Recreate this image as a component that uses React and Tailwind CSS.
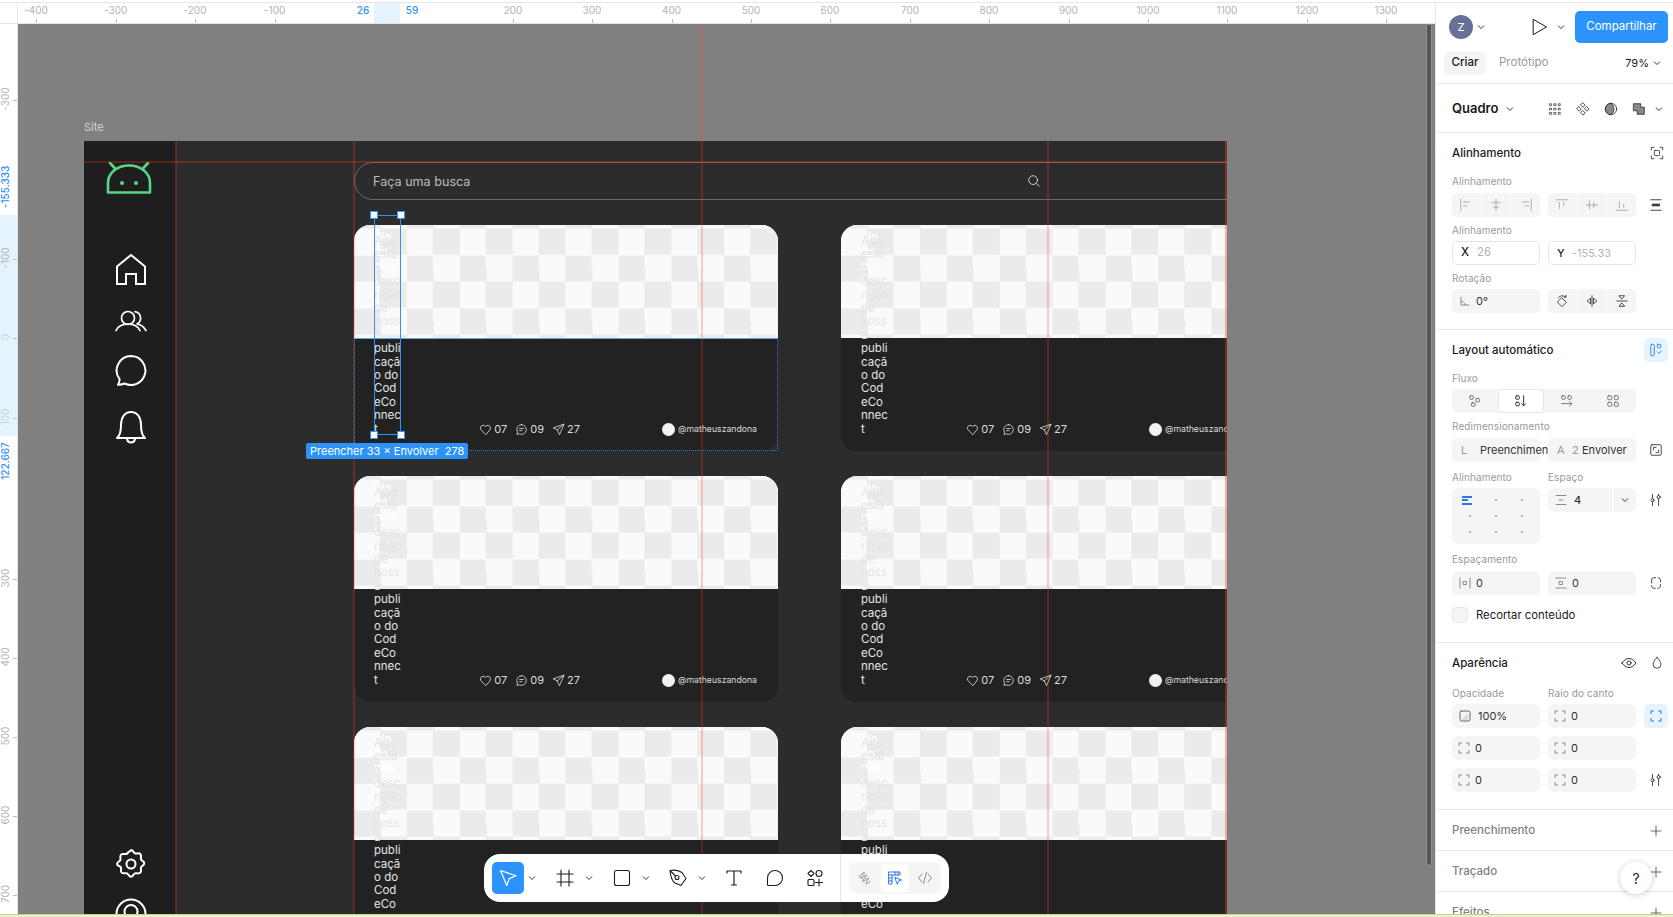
import React from "react";

const Svg = ({ s = 16, w, h, vb = "0 0 16 16", c = "currentColor", sw = 1, className = "", children }) => (
  <svg width={w || s} height={h || s} viewBox={vb} fill="none" stroke={c} strokeWidth={sw} strokeLinecap="round" strokeLinejoin="round" className={"shrink-0 " + className}>
    {children}
  </svg>
);

const Chev = ({ className = "" }) => (
  <svg width="8" height="6" viewBox="0 0 8 6" fill="none" stroke="#333" strokeWidth="1" className={"shrink-0 " + className}><path d="M1 1.5 4 4.5 7 1.5" /></svg>
);

/* ---------- rulers ---------- */
const topMarks = [[-400, 36], [-300, 115.7], [-200, 195], [-100, 274.7], [200, 513], [300, 592], [400, 671.5], [500, 751], [600, 830], [700, 910], [800, 989], [900, 1068.5], [1000, 1148], [1100, 1227], [1200, 1307], [1300, 1386]];
const leftMarks = [[-300, 100, "-300"], [-100, 259, "-100"], [0, 338, "0"], [100, 418, "100"], [300, 579, "300"], [400, 658, "400"], [500, 737, "500"], [600, 816, "600"], [700, 895, "700"]];

function TopRuler() {
  return (
    <div className="h-[21px] flex bg-white border-b border-[#e6e6e6] shrink-0 relative">
      <div className="w-[18px] shrink-0 border-r border-[#e6e6e6]" />
      <div className="flex-1 relative overflow-hidden text-[10px] leading-[12px] text-[#b3b3b3]">
        <div className="absolute left-[356px] top-0 w-[26px] h-[20px] bg-[#e5f3ff]" />
        {topMarks.map(([v, x]) => (
          <React.Fragment key={v}>
            <span className="absolute top-[1px] -translate-x-1/2" style={{ left: x - 18 }}>{v}</span>
            <span className="absolute top-[16px] w-px h-[4px] bg-[#bbb]" style={{ left: x - 18 }} />
          </React.Fragment>
        ))}
        <span className="absolute top-[1px] left-[345px] -translate-x-1/2 text-[#2b93fb] font-medium">26</span>
        <span className="absolute top-[1px] left-[394px] -translate-x-1/2 text-[#2b93fb] font-medium">59</span>
      </div>
    </div>
  );
}

function LeftRuler() {
  return (
    <div className="w-[18px] shrink-0 bg-white border-r border-[#e6e6e6] relative overflow-hidden text-[10px] leading-[12px] text-[#b3b3b3]">
      <div className="absolute left-0 top-[191px] w-[17px] h-[221px] bg-[#e5f3ff]" />
      {leftMarks.map(([v, y, t]) => (
        <React.Fragment key={v}>
          <span className={"absolute left-[5px] -translate-x-1/2 -translate-y-1/2 -rotate-90 " + (v === 0 || v === 100 ? "text-[#c9d3dc]" : "")} style={{ top: y - 24 - 1 }}>{t}</span>
          <span className="absolute left-[13px] h-px w-[4px] bg-[#bbb]" style={{ top: y - 24 }} />
        </React.Fragment>
      ))}
      <span className="absolute left-[5px] top-[163px] -translate-x-1/2 -translate-y-1/2 -rotate-90 text-[#2b93fb] font-medium whitespace-nowrap">-155.333</span>
      <span className="absolute left-[5px] top-[437px] -translate-x-1/2 -translate-y-1/2 -rotate-90 text-[#2b93fb] font-medium whitespace-nowrap">122.667</span>
    </div>
  );
}

/* ---------- card ---------- */
function Card() {
  const lines = ["Aqui", "está", "a", "desc", "rição", "de", "noss", "a", "publi", "caçã", "o do", "Cod", "eCo", "nnec", "t"];
  return (
    <div className="w-[424px] h-[226px] rounded-[16px] overflow-hidden relative">
      <div className="h-[113px] bg-[#fafafa] bg-[conic-gradient(#ebebeb_25%,#fafafa_0_50%,#ebebeb_0_75%,#fafafa_0)] bg-[length:52.9px_53px] bg-[position:0px_3.6px]" />
      <div className="h-[113px] bg-[#222222] flex items-end justify-end pb-[15px] pr-[21px] text-[#dcdcdc]">
        <div className="flex items-center text-[11px] leading-[14px] gap-[8px] mr-[82px]">
          <span className="flex items-center gap-[2px]">
            <Svg s={13} c="#e0e0e0"><path d="M8 14 2.400 8.200A3.400 3.400 0 0 1 7.200 3.500L8 4.300l.8-.8a3.400 3.400 0 0 1 4.800 4.700z" /></Svg>07
          </span>
          <span className="flex items-center gap-[2px]">
            <Svg s={13} c="#e0e0e0"><path d="M8 2a6 6 0 1 1-2.700 11.400L2.400 14l.7-2.800A6 6 0 0 1 8 2zM5.600 6.800h4.800M5.600 9.400h3" /></Svg>09
          </span>
          <span className="flex items-center gap-[2px]">
            <Svg s={13} c="#e0e0e0"><path d="M14.500 1.500 1.500 6l5 2.500 2.500 5.500zM6.500 8.500l8-7" /></Svg>27
          </span>
        </div>
        <div className="flex items-center gap-[3px] w-[95px] shrink-0">
          <span className="w-[13px] h-[13px] rounded-full bg-[#f2f2f2] shrink-0" />
          <span className="text-[8.700px] leading-[14px] whitespace-nowrap">@matheuszandona</span>
        </div>
      </div>
      <div className="absolute left-[20px] -top-[10px] w-[27px] text-[11.500px] leading-[14.800px] font-semibold text-white">
        Tít<br />ulo<br />do<br />pos<br />t
      </div>
      <div className="absolute left-[20px] top-[10px] w-[27px] text-[11.500px] leading-[13.400px] text-[#e4e4e4]">
        {lines.map((l, i) => <div key={i} className="whitespace-nowrap">{l}</div>)}
      </div>
    </div>
  );
}

/* ---------- sidebar ---------- */
function Sidebar() {
  return (
    <div className="w-[92px] shrink-0 bg-[#1e1e1e] flex flex-col items-center text-white pl-[2px]">
      <svg width="46" height="32" viewBox="0 0 46 32" fill="none" stroke="#57d684" strokeWidth="2.600" strokeLinecap="round" strokeLinejoin="round" className="mt-[21px] shrink-0 -ml-[4px]">
        <path d="M2 30.500V21C2 11 11 3.500 23 3.500S44 11 44 21v9.500zM4 1l5.500 6M42 1l-5.500 6" />
        <circle cx="16" cy="21" r="2" fill="#57d684" stroke="none" />
        <circle cx="30" cy="21" r="2" fill="#57d684" stroke="none" />
      </svg>
      <Svg w={32} h={34} vb="0 0 32 34" sw={2} c="#fff" className="mt-[59px]"><path d="M2 31V13.500L16 2l14 11.500V31H21V21h-10v10z" strokeLinecap="square" strokeLinejoin="miter" /></Svg>
      <Svg w={32} h={22} vb="0 0 32 22" sw={1.700} c="#fff" className="mt-[23px]">
        <circle cx="13" cy="8" r="6.500" />
        <path d="M1 20.500c2-4.300 6-6.300 12-6.300s10 2 12 6.300" />
        <path d="M20 1.700a6.500 6.500 0 0 1 2 12.200c4 .8 7 3 9 6.600" />
      </Svg>
      <Svg w={32} h={32} vb="0 0 32 32" sw={2} c="#fff" className="mt-[22px]">
        <path d="M16 2a14.500 14.500 0 1 1-6.500 27.500c-2 .9-4.500 1.300-6.500 1.200 1-1.500 1.600-3.500 1.600-5.500A14.500 14.500 0 0 1 16 2z" />
      </Svg>
      <Svg w={32} h={34} vb="0 0 32 34" sw={2} c="#fff" className="mt-[24px]">
        <path d="M2 28c3-2.500 4-6 4-13C6 7 10 2 16 2s10 5 10 13c0 7 1 10.500 4 13z" />
        <path d="M12 29c.5 2.500 2 3.500 4 3.500s3.500-1 4-3.500" />
      </Svg>
      <Svg w={32} h={32} vb="0 0 24 24" sw={1.500} c="#fff" className="mt-[404px]">
        <circle cx="12" cy="12" r="3.400" />
        <path d="M12 1.500c1.600 0 1.900 2 3 2.500s2.800-.700 4 .5.100 2.800.500 4 2.500 1.400 2.500 3-2 1.900-2.500 3 .7 2.800-.5 4-2.800.100-4 .500-1.400 2.500-3 2.500-1.900-2-3-2.500-2.800.700-4-.5-.100-2.800-.500-4S1.500 13.600 1.500 12s2-1.900 2.500-3-.700-2.800.500-4 2.800-.100 4-.500 1.900-2.500 3.500-2.500z" />
      </Svg>
      <Svg w={32} h={32} vb="0 0 32 32" sw={2} c="#fff" className="mt-[18px]">
        <circle cx="16" cy="16" r="14.500" />
        <circle cx="16" cy="13.500" r="6.500" />
      </Svg>
    </div>
  );
}

/* ---------- toolbar ---------- */
function Toolbar() {
  return (
    <div className="absolute left-[466px] top-[830px] w-[465px] h-[48px] bg-white rounded-[16px] flex items-center pl-[8px] text-[#1e1e1e]">
      <div className="w-[32px] h-[32px] rounded-[5px] bg-[#2b93fb] flex items-center justify-center">
        <Svg s={20} vb="0 0 20 20" c="#fff" sw={1.200}><path d="M2.500 2.500 18 7.800 11.200 10.600 8.800 17.500z" /></Svg>
      </div>
      <Chev className="ml-[4px]" />
      <Svg s={18} vb="0 0 18 18" className="ml-[20px]" sw={1.100}><path d="M5 1v16M13 1v16M1 5h16M1 13h16" /></Svg>
      <Chev className="ml-[11px]" />
      <Svg s={18} vb="0 0 18 18" className="ml-[20px]" sw={1.100}><rect x="1.500" y="1.500" width="15" height="15" rx="2" /></Svg>
      <Chev className="ml-[11px]" />
      <Svg s={20} vb="0 0 20 20" className="ml-[18px]" sw={1.100}><path d="M2 2.500c4-.8 8-.3 12 2l4 6-5 7-6-2.500C4 13 2.500 8 2 2.500zM2 2.500l5.500 5.500" /><circle cx="9" cy="9.500" r="2" /></Svg>
      <Chev className="ml-[10px]" />
      <Svg s={18} vb="0 0 18 18" className="ml-[19px]" sw={1.200}><path d="M2 4V2h14v2M9 2v14M6.500 16h5" /></Svg>
      <Svg s={18} vb="0 0 18 18" className="ml-[23px]" sw={1.100}><path d="M9 1.500a7.500 7.500 0 0 1 0 15H2.500a1 1 0 0 1-1-1V9A7.500 7.500 0 0 1 9 1.500z" /></Svg>
      <Svg s={18} vb="0 0 18 18" className="ml-[22px]" sw={1.100}><path d="M5 1.500 8 4.500 5 7.500 2 4.500z" /><circle cx="13" cy="4.500" r="3" /><rect x="2" y="10.500" width="6" height="6" rx="1" /><path d="M13 10v7M9.500 13.500h7" /></Svg>
      <div className="ml-[16px] w-px h-[48px] bg-[#e6e6e6]" />
      <div className="ml-[8px] w-[92px] h-[32px] bg-[#f5f5f5] rounded-[8px] flex items-center pl-[2px]">
        <div className="w-[28px] h-[28px] flex items-center justify-center">
          <Svg s={16} c="#8c8c8c"><path d="M2 7c3-4 5-5 5.500-4.500S3 8 3.500 8.500 9 4.500 9.500 5 5 11 5.500 11.500 11 7.500 11.500 8 8 13 9 13.500s2.500-.5 4-2" /></Svg>
        </div>
        <div className="ml-[2px] w-[28px] h-[28px] rounded-[5px] bg-white flex items-center justify-center">
          <Svg s={16} c="#2b78e4"><path d="M2 2h11v3H5v9H2zM2 5h3M2 8h3M2 11h3M8 2v3M11 2v3" /><path d="M8 7.500 14.500 10l-3 1-1 3z" /></Svg>
        </div>
        <div className="ml-[2px] w-[28px] h-[28px] flex items-center justify-center">
          <Svg s={16} c="#8c8c8c"><path d="M5 4 1.500 8 5 12M11 4l3.500 4L11 12M9.500 2.500l-3 11" /></Svg>
        </div>
      </div>
    </div>
  );
}

/* ---------- canvas ---------- */
function Canvas() {
  return (
    <div className="flex-1 relative overflow-hidden bg-[#808080] pl-[66px] pt-[95px] flex flex-col">
      <div className="h-[22px] shrink-0 text-[11px] leading-[16px] text-[#d4d4d4]">Site</div>
      <div className="w-[1143px] flex-1 min-h-0 flex overflow-hidden bg-[#2c2c2c]">
        <Sidebar />
        <div className="flex-1 min-w-0 overflow-hidden pl-[178px] pt-[21px]">
          <div className="w-[1000px] h-[38px] rounded-full border border-[#6a6a6a] flex items-center pl-[18px] pt-[2px] text-[12.600px] text-[#bdbdbd] relative">
            Faça uma busca
            <Svg s={14} c="#e0e0e0" className="absolute left-[672px] top-[11px]"><circle cx="7" cy="7" r="5" /><path d="m11 11 3 3" /></Svg>
          </div>
          <div className="grid grid-cols-[424px_424px] gap-x-[63px] gap-y-[25px] mt-[25px]">
            {[0, 1, 2, 3, 4, 5].map((i) => <Card key={i} />)}
          </div>
        </div>
      </div>

      {/* guides */}
      <div className="absolute left-[683px] top-0 bottom-0 w-[2px] bg-[#ff3b20]/25" />
      <div className="absolute left-[157px] top-[117px] bottom-0 w-[2px] bg-[#ff3b20]/25" />
      <div className="absolute left-[335px] top-[117px] bottom-0 w-[2px] bg-[#ff3b20]/25" />
      <div className="absolute left-[1029px] top-[117px] bottom-0 w-[2px] bg-[#ff3b20]/25" />
      <div className="absolute left-[1207px] top-[117px] bottom-0 w-[2px] bg-[#ff3b20]/40" />
      <div className="absolute left-[66px] top-[137px] w-[1143px] h-[2px] bg-[#ff3b20]/25" />

      {/* selection */}
      <div className="absolute left-[336px] top-[314px] w-[424px] h-[113px] border-x border-b border-dotted border-[#2b7fd6]" />
      <div className="absolute left-[336px] top-[314px] w-[424px] h-px bg-[#5aa8f0]" />
      <div className="absolute left-[356px] top-[191px] w-[27px] h-[220px] border border-[#2b93fb]" />
      {["left-[352px] top-[187px]", "left-[379px] top-[187px]", "left-[352px] top-[407px]", "left-[379px] top-[407px]"].map((p) => (
        <div key={p} className={"absolute w-[8px] h-[8px] bg-white border border-[#2b93fb] " + p} />
      ))}
      <div className="absolute left-[288px] top-[419px] h-[16px] w-[162px] rounded-[2px] bg-[#2b93fb] text-white text-[11px] leading-[16px] px-[4px] whitespace-pre">Preencher 33 × Envolver  278</div>

      <Toolbar />
      <div className="absolute left-[1408px] top-0 h-[842px] w-[6px] rounded-b-full bg-[#555] border border-[#909090]" />
    </div>
  );
}

/* ---------- right panel ---------- */
const Label = ({ children, className = "" }) => <div className={"text-[10px] leading-[12px] tracking-[0.1px] text-[#999] " + className}>{children}</div>;
const Title = ({ children, className = "" }) => <div className={"text-[11.500px] leading-[16px] font-medium text-[#1a1a1a] " + className}>{children}</div>;
const Field = ({ children, className = "" }) => <div className={"h-[24px] rounded-[5px] bg-[#f5f5f5] flex items-center text-[11px] text-[#333] " + className}>{children}</div>;
const Corner = ({ c = "#8c8c8c" }) => <Svg s={12} vb="0 0 12 12" c={c} sw={1}><path d="M1 4V1h3M8 1h3v3M11 8v3H8M4 11H1V8" strokeLinecap="butt" /></Svg>;
const Tune = () => <Svg s={14} c="#333"><path d="M4 1.500v5M4 10v4.500M11 1.500V3M11 6.500v8" /><circle cx="4" cy="8.300" r="1.800" /><circle cx="11" cy="4.700" r="1.800" /></Svg>;
const G3 = ({ children, className = "" }) => <div className={"grid grid-cols-[88px_88px_24px] gap-x-[8px] " + className}>{children}</div>;
const Cell = ({ children }) => <div className="flex-1 h-full flex items-center justify-center">{children}</div>;
const D = "#a6a6a6";

function Panel() {
  return (
    <div className="w-[238px] shrink-0 bg-white border-l border-[#e6e6e6] flex flex-col overflow-hidden text-[#1a1a1a]">
      <div className="h-[81px] shrink-0 border-b border-[#e6e6e6] pt-[8px]">
        <div className="h-[32px] flex items-center pl-[13px]">
          <div className="w-[24px] h-[24px] rounded-full bg-[#667099] text-white text-[11px] font-medium flex items-center justify-center">Z</div>
          <Chev className="ml-[4px]" />
          <Svg w={16} h={18} vb="0 0 16 18" c="#1a1a1a" className="ml-[47px]"><path d="M1.500 1.500 14.500 9 1.500 16.500z" /></Svg>
          <Chev className="ml-[9px]" />
          <div className="ml-[10px] w-[93px] h-[32px] rounded-[5px] bg-[#2b93fb] text-white text-[11.500px] flex items-center justify-center">Compartilhar</div>
        </div>
        <div className="h-[24px] mt-[8px] flex items-center pl-[8px] text-[11.500px]">
          <div className="w-[42px] h-[24px] rounded-[5px] bg-[#f5f5f5] font-medium flex items-center justify-center">Criar</div>
          <div className="ml-[13px] text-[#999]">Protótipo</div>
          <div className="ml-auto mr-[12px] flex items-center gap-[4px] text-[11px]">79%<Chev /></div>
        </div>
      </div>

      <div className="h-[49px] shrink-0 border-b border-[#e6e6e6] flex items-center pl-[16px] pr-[10px] pt-[2px]">
        <div className="text-[13px] font-semibold">Quadro</div>
        <Chev className="ml-[8px]" />
        <Svg s={14} c="#333" sw={0.800} className="ml-[34px]"><path d="M2 2h2v2H2zM7 2h2v2H7zM12 2h2v2h-2zM2 7h2v2H2zM7 7h2v2H7zM12 7h2v2h-2zM2 12h2v2H2zM7 12h2v2H7zM12 12h2v2h-2z" /></Svg>
        <Svg s={14} c="#333" className="ml-[14px]"><path d="M8 1 10.500 3.500 8 6 5.500 3.500zM3.500 5.500 6 8 3.500 10.500 1 8zM12.500 5.500 15 8l-2.500 2.500L10 8zM8 10l2.500 2.500L8 15l-2.500-2.500z" /></Svg>
        <Svg s={14} c="#333" className="ml-[14px]"><circle cx="8" cy="8" r="6.500" /><path d="M8 1.500a6.500 6.500 0 0 0 0 13 8 8 0 0 0 0-13z" fill="#888" /></Svg>
        <Svg s={14} c="#333" className="ml-[14px]"><path d="M2 2h8v4h4v8H6v-4H2z" fill="#888" /></Svg>
        <Chev className="ml-[9px]" />
      </div>

      <div className="h-[197px] shrink-0 border-b border-[#e6e6e6] pl-[16px] pt-[12px]">
        <div className="flex items-center justify-between w-[212px] h-[16px]">
          <Title>Alinhamento</Title>
          <Svg s={14} c="#333"><path d="M1.500 4.500v-3h3M11.500 1.500h3v3M14.500 11.500v3h-3M4.500 14.500h-3v-3" /><rect x="5" y="5" width="6" height="6" rx="1" /></Svg>
        </div>
        <Label className="mt-[14px]">Alinhamento</Label>
        <G3 className="mt-[6px]">
          <Field className="overflow-hidden">
            <Cell><Svg s={14} c={D}><path d="M2 1.500v13M5 4.500h7M5 9h4" /></Svg></Cell><div className="w-px h-full bg-white" />
            <Cell><Svg s={14} c={D}><path d="M8 1.500v13M3 5h10M5 10.500h6" /></Svg></Cell><div className="w-px h-full bg-white" />
            <Cell><Svg s={14} c={D}><path d="M14 1.500v13M4 4.500h7M7 9h4" /></Svg></Cell>
          </Field>
          <Field className="overflow-hidden">
            <Cell><Svg s={14} c={D}><path d="M1.500 2h13M5 5v7M10 5v4" /></Svg></Cell><div className="w-px h-full bg-white" />
            <Cell><Svg s={14} c={D}><path d="M1.500 8h13M5 3.500v9M10 5v6" /></Svg></Cell><div className="w-px h-full bg-white" />
            <Cell><Svg s={14} c={D}><path d="M1.500 14h13M5 4v7M10 7v4" /></Svg></Cell>
          </Field>
          <div className="flex items-center justify-center"><Svg s={14} c="#333"><path d="M2 2h12M2 14h12" /><rect x="4" y="7" width="8" height="2" fill="#333" /></Svg></div>
        </G3>
        <Label className="mt-[7px]">Alinhamento</Label>
        <G3 className="mt-[5px]">
          <div className="h-[24px] rounded-[5px] border border-[#e6e6e6] flex items-center text-[11.500px] pl-[8px]"><span className="font-medium w-[16px]">X</span><span className="text-[#b3b3b3]">26</span></div>
          <div className="h-[24px] rounded-[5px] border border-[#e6e6e6] flex items-center text-[11px] pl-[8px]"><span className="font-medium w-[15px]">Y</span><span className="text-[#b3b3b3]">-155.33</span></div>
        </G3>
        <Label className="mt-[7px]">Rotação</Label>
        <G3 className="mt-[5px]">
          <Field className="pl-[7px]"><Svg s={12} vb="0 0 12 12" c="#8c8c8c"><path d="M2 2v8h8M2 6c2 0 4 2 4 4" /></Svg><span className="ml-[5px]">0°</span></Field>
          <Field className="overflow-hidden">
            <Cell><Svg s={14} c="#333"><path d="M8 4.500 13 9.500 8 14.500 3 9.500zM3.500 4.500C5 2 10 1 12.500 3.500M12.500 1.500v2h-2" /></Svg></Cell><div className="w-px h-full bg-white" />
            <Cell><Svg s={14} c="#333"><path d="M8 2v12M6 5 2.500 8 6 11zM10 5l3.500 3L10 11z" /></Svg></Cell><div className="w-px h-full bg-white" />
            <Cell><Svg s={14} c="#333"><path d="M2 8h12M5 2h6L8 5.500zM5 14h6l-3-3.500z" /></Svg></Cell>
          </Field>
        </G3>
      </div>

      <div className="h-[313px] shrink-0 border-b border-[#e6e6e6] pl-[16px] pt-[8px]">
        <div className="flex items-center justify-between w-[216px] h-[24px]">
          <Title>Layout automático</Title>
          <div className="w-[24px] h-[24px] rounded-[5px] bg-[#e5f4ff] flex items-center justify-center"><Svg s={14} c="#2b78e4"><rect x="2" y="1.500" width="4" height="13" rx="1" /><rect x="9.500" y="1.500" width="4" height="4" rx="1" /><path d="m9.500 10 2 2 2.500-3" /></Svg></div>
        </div>
        <Label className="mt-[10px]">Fluxo</Label>
        <Field className="mt-[5px] w-[184px] overflow-hidden">
          <div className="w-[46px] h-full flex items-center justify-center"><Svg s={14} c="#666"><rect x="2" y="2" width="4" height="4" rx="1" /><rect x="9" y="5" width="4" height="4" rx="1" /><rect x="4" y="10" width="4" height="4" rx="1" /></Svg></div>
          <div className="w-[46px] h-[24px] rounded-[5px] bg-white border border-[#e6e6e6] flex items-center justify-center"><Svg s={14} c="#1a1a1a"><rect x="2" y="2" width="4" height="4" rx="1" /><rect x="2" y="9.500" width="4" height="4" rx="1" /><path d="M11 2v11M8.500 11 11 13.500 13.500 11" /></Svg></div>
          <div className="w-[46px] h-full flex items-center justify-center"><Svg s={14} c="#666"><rect x="2" y="2" width="4" height="4" rx="1" /><rect x="9" y="2" width="4" height="4" rx="1" /><path d="M2 11h11M11 8.500 13.500 11 11 13.500" /></Svg></div>
          <div className="w-[46px] h-full flex items-center justify-center"><Svg s={14} c="#666"><rect x="2" y="2" width="4.500" height="4.500" rx="1" /><rect x="9.500" y="2" width="4.500" height="4.500" rx="1" /><rect x="2" y="9.500" width="4.500" height="4.500" rx="1" /><rect x="9.500" y="9.500" width="4.500" height="4.500" rx="1" /></Svg></div>
        </Field>
        <Label className="mt-[7px]">Redimensionamento</Label>
        <G3 className="mt-[6px]">
          <Field className="pl-[9px] whitespace-nowrap"><span className="text-[#999] w-[18px] shrink-0">L</span><span className="ml-[1px] w-[69px] shrink-0 overflow-hidden">Preenchimento</span></Field>
          <Field className="pl-[9px] overflow-hidden whitespace-nowrap"><span className="text-[#999] w-[15px] shrink-0">A</span><span className="text-[#999] w-[10px] shrink-0">2</span><span>Envolver</span></Field>
          <div className="flex items-center justify-center"><Svg s={14} c="#333"><rect x="2" y="2" width="12" height="12" rx="1.500" /><path d="M5 8V5h3M11 8v3H8" /></Svg></div>
        </G3>
        <G3 className="mt-[9px]">
          <Label>Alinhamento</Label><Label>Espaço</Label>
        </G3>
        <G3 className="mt-[5px]">
          <div className="h-[56px] rounded-[5px] bg-[#f5f5f5] grid grid-cols-3 grid-rows-3 px-[5px] py-[4px]">
            <div className="flex flex-col justify-center items-center gap-[1.500px]"><span className="w-[10px] h-[2px] bg-[#2b78e4] self-start ml-[5px]" /><span className="w-[6px] h-[2px] bg-[#2b78e4] self-start ml-[5px]" /><span className="w-[10px] h-[2px] bg-[#2b78e4] self-start ml-[5px]" /></div>
            {[0, 1, 2, 3, 4, 5, 6, 7].map((i) => <div key={i} className="flex items-center justify-center"><span className="w-[1.500px] h-[1.500px] bg-[#b3b3b3]" /></div>)}
          </div>
          <Field className="pl-[7px]">
            <Svg s={12} vb="0 0 12 12" c="#8c8c8c"><path d="M1 1.500h10M1 10.500h10M4 6h4" /></Svg>
            <span className="ml-[7px] font-medium">4</span>
            <div className="ml-auto w-[24px] h-full border-l border-white flex items-center justify-center"><Chev /></div>
          </Field>
          <div className="flex items-start justify-center pt-[5px]"><Tune /></div>
        </G3>
        <Label className="mt-[9px]">Espaçamento</Label>
        <G3 className="mt-[6px]">
          <Field className="pl-[7px]"><Svg s={12} vb="0 0 12 12" c="#8c8c8c"><path d="M1 1v10M11 1v10" /><rect x="4.500" y="4.500" width="3" height="3" /></Svg><span className="ml-[5px]">0</span></Field>
          <Field className="pl-[7px]"><Svg s={12} vb="0 0 12 12" c="#8c8c8c"><path d="M1 1h10M1 11h10" /><rect x="4.500" y="4.500" width="3" height="3" /></Svg><span className="ml-[5px]">0</span></Field>
          <div className="flex items-center justify-center"><Svg s={14} c="#333"><path d="M3 4.500c0-1.500 1-2.500 2.500-2.500h5C12 2 13 3 13 4.500v7c0 1.500-1 2.500-2.500 2.500h-5C4 14 3 13 3 11.500z" strokeDasharray="6 3" /></Svg></div>
        </G3>
        <div className="flex items-center mt-[12px]">
          <div className="w-[16px] h-[16px] rounded-[4px] bg-[#f5f5f5] border border-[#e6e6e6]" />
          <span className="ml-[8px] text-[11.300px]">Recortar conteúdo</span>
        </div>
      </div>

      <div className="h-[167px] shrink-0 border-b border-[#e6e6e6] pl-[16px] pt-[12px]">
        <div className="flex items-center w-[212px] h-[16px]">
          <Title>Aparência</Title>
          <Svg s={16} c="#333" className="ml-auto"><path d="M1 8c2-3 4.500-4.500 7-4.500S13 5 15 8c-2 3-4.500 4.500-7 4.500S3 11 1 8z" /><circle cx="8" cy="8" r="2" /></Svg>
          <Svg s={14} c="#333" className="ml-[13px]"><path d="M8 1.500c2.500 3 4.500 5.500 4.500 8a4.500 4.500 0 0 1-9 0c0-2.500 2-5 4.500-8z" /></Svg>
        </div>
        <G3 className="mt-[16px]"><Label>Opacidade</Label><Label>Raio do canto</Label></G3>
        <G3 className="mt-[5px]">
          <Field className="pl-[7px]"><Svg s={12} vb="0 0 12 12" c="#666"><rect x="1" y="1" width="10" height="10" rx="1.500" /><path d="M4 9h0M6 9h0M8 9h0M6 7h0M8 7h0M8 5h0" /></Svg><span className="ml-[7px]">100%</span></Field>
          <Field className="pl-[6px]"><Corner /><span className="ml-[5px]">0</span></Field>
          <div className="h-[24px] rounded-[5px] bg-[#e5f4ff] flex items-center justify-center"><Corner c="#2b78e4" /></div>
        </G3>
        <G3 className="mt-[8px]">
          <Field className="pl-[6px]"><Corner /><span className="ml-[5px]">0</span></Field>
          <Field className="pl-[6px]"><Corner /><span className="ml-[5px]">0</span></Field>
        </G3>
        <G3 className="mt-[8px]">
          <Field className="pl-[6px]"><Corner /><span className="ml-[5px]">0</span></Field>
          <Field className="pl-[6px]"><Corner /><span className="ml-[5px]">0</span></Field>
          <div className="flex items-center justify-center"><Tune /></div>
        </G3>
      </div>

      {["Preenchimento", "Traçado", "Efeitos"].map((t) => (
        <div key={t} className="h-[41px] shrink-0 border-b border-[#e6e6e6] pl-[16px] pr-[11px] pt-[2px] flex items-center justify-between">
          <span className="text-[11.500px] font-medium text-[#808080]">{t}</span>
          <Svg s={12} vb="0 0 12 12" c="#666"><path d="M6 1v10M1 6h10" /></Svg>
        </div>
      ))}
    </div>
  );
}

export default function App() {
  return (
    <div className="w-[1673px] h-[917px] overflow-hidden relative bg-white flex flex-col font-['Inter',sans-serif]">
      <div className="h-[3px] shrink-0 border-b border-[#e6e6e6]" />
      <div className="flex-1 min-h-0 flex">
        <div className="w-[1435px] shrink-0 flex flex-col min-h-0">
          <TopRuler />
          <div className="flex-1 min-h-0 flex">
            <LeftRuler />
            <Canvas />
          </div>
        </div>
        <Panel />
      </div>
      <div className="h-[3px] shrink-0 bg-[#e9f2c9] border-t border-[#c9d0a8]" />
      <div className="absolute left-[1620px] top-[862px] w-[32px] h-[32px] rounded-full bg-white shadow-[0_1px_6px_rgba(0,0,0,0.2)] flex items-center justify-center text-[14px] text-[#1a1a1a]">?</div>
    </div>
  );
}
